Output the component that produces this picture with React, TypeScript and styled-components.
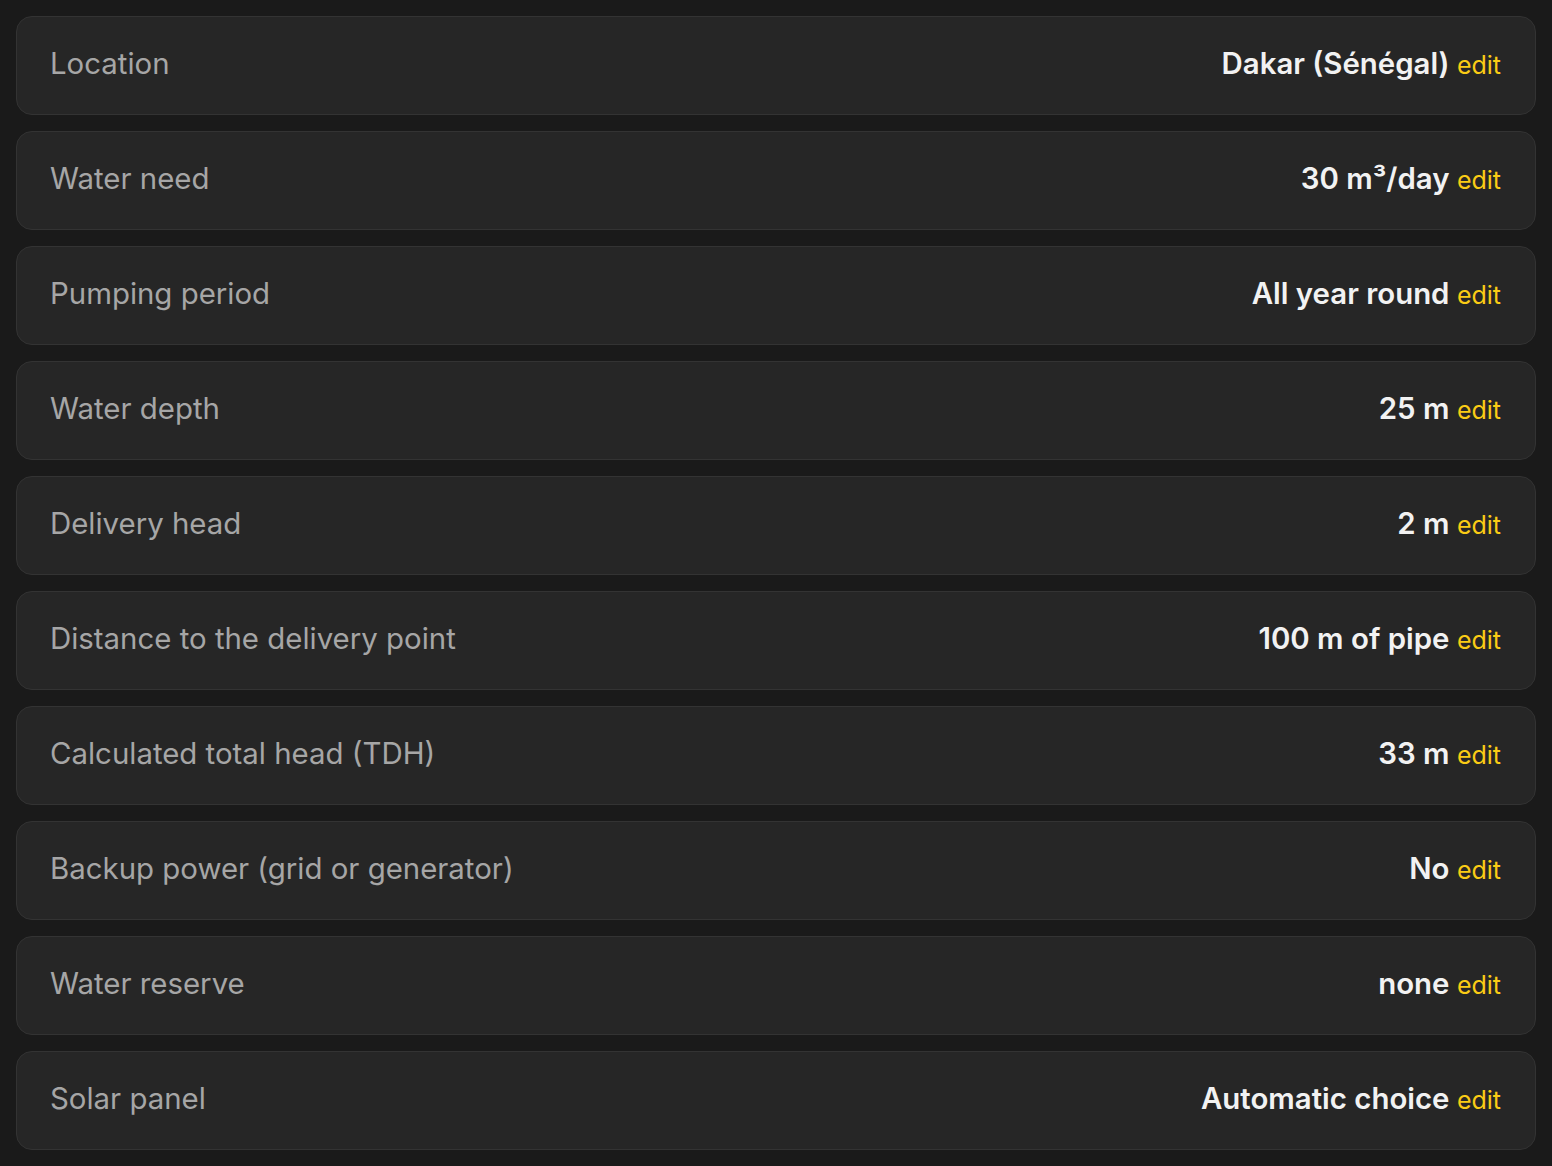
import styled, { createGlobalStyle } from "styled-components";

const settings = [
  { id: 1, label: "Location", value: "Dakar (Sénégal)" },
  { id: 2, label: "Water need", value: "30 m³/day" },
  { id: 3, label: "Pumping period", value: "All year round" },
  { id: 4, label: "Water depth", value: "25 m" },
  { id: 5, label: "Delivery head", value: "2 m" },
  { id: 6, label: "Distance to the delivery point", value: "100 m of pipe" },
  { id: 7, label: "Calculated total head (TDH)", value: "33 m" },
  { id: 8, label: "Backup power (grid or generator)", value: "No" },
  { id: 9, label: "Water reserve", value: "none" },
  { id: 10, label: "Solar panel", value: "Automatic choice" },
];

export default function App() {
  return (
    <>
      <GlobalStyle />
      <List>
        {settings.map(({ id, label, value }) => (
          <Row key={id}>
            <Label>{label}</Label>
            <Value>
              {value} <Edit href="#">edit</Edit>
            </Value>
          </Row>
        ))}
      </List>
    </>
  );
}

const GlobalStyle = createGlobalStyle`
  html, body {
    margin: 0;
    background: #1a1a1a;
    font-family: Inter, "Noto Sans", sans-serif;
  }
`;

const List = styled.div`
  display: flex;
  flex-direction: column;
  gap: 16px;
  padding: 16px;
`;

const Row = styled.div`
  display: flex;
  justify-content: space-between;
  align-items: center;
  box-sizing: border-box;
  height: 99px;
  padding: 0 34px 4px 33px;
  background: #262626;
  border: 1.5px solid #333333;
  border-radius: 16px;
`;

const Label = styled.span`
  font-size: 29.4px;
  color: #a6a6a6;
`;

const Value = styled.span`
  font-size: 29.4px;
  font-weight: 600;
  color: #f2f2f2;
`;

const Edit = styled.a`
  font-size: 25px;
  font-weight: 400;
  color: #facc15;
  text-decoration: none;
`;
